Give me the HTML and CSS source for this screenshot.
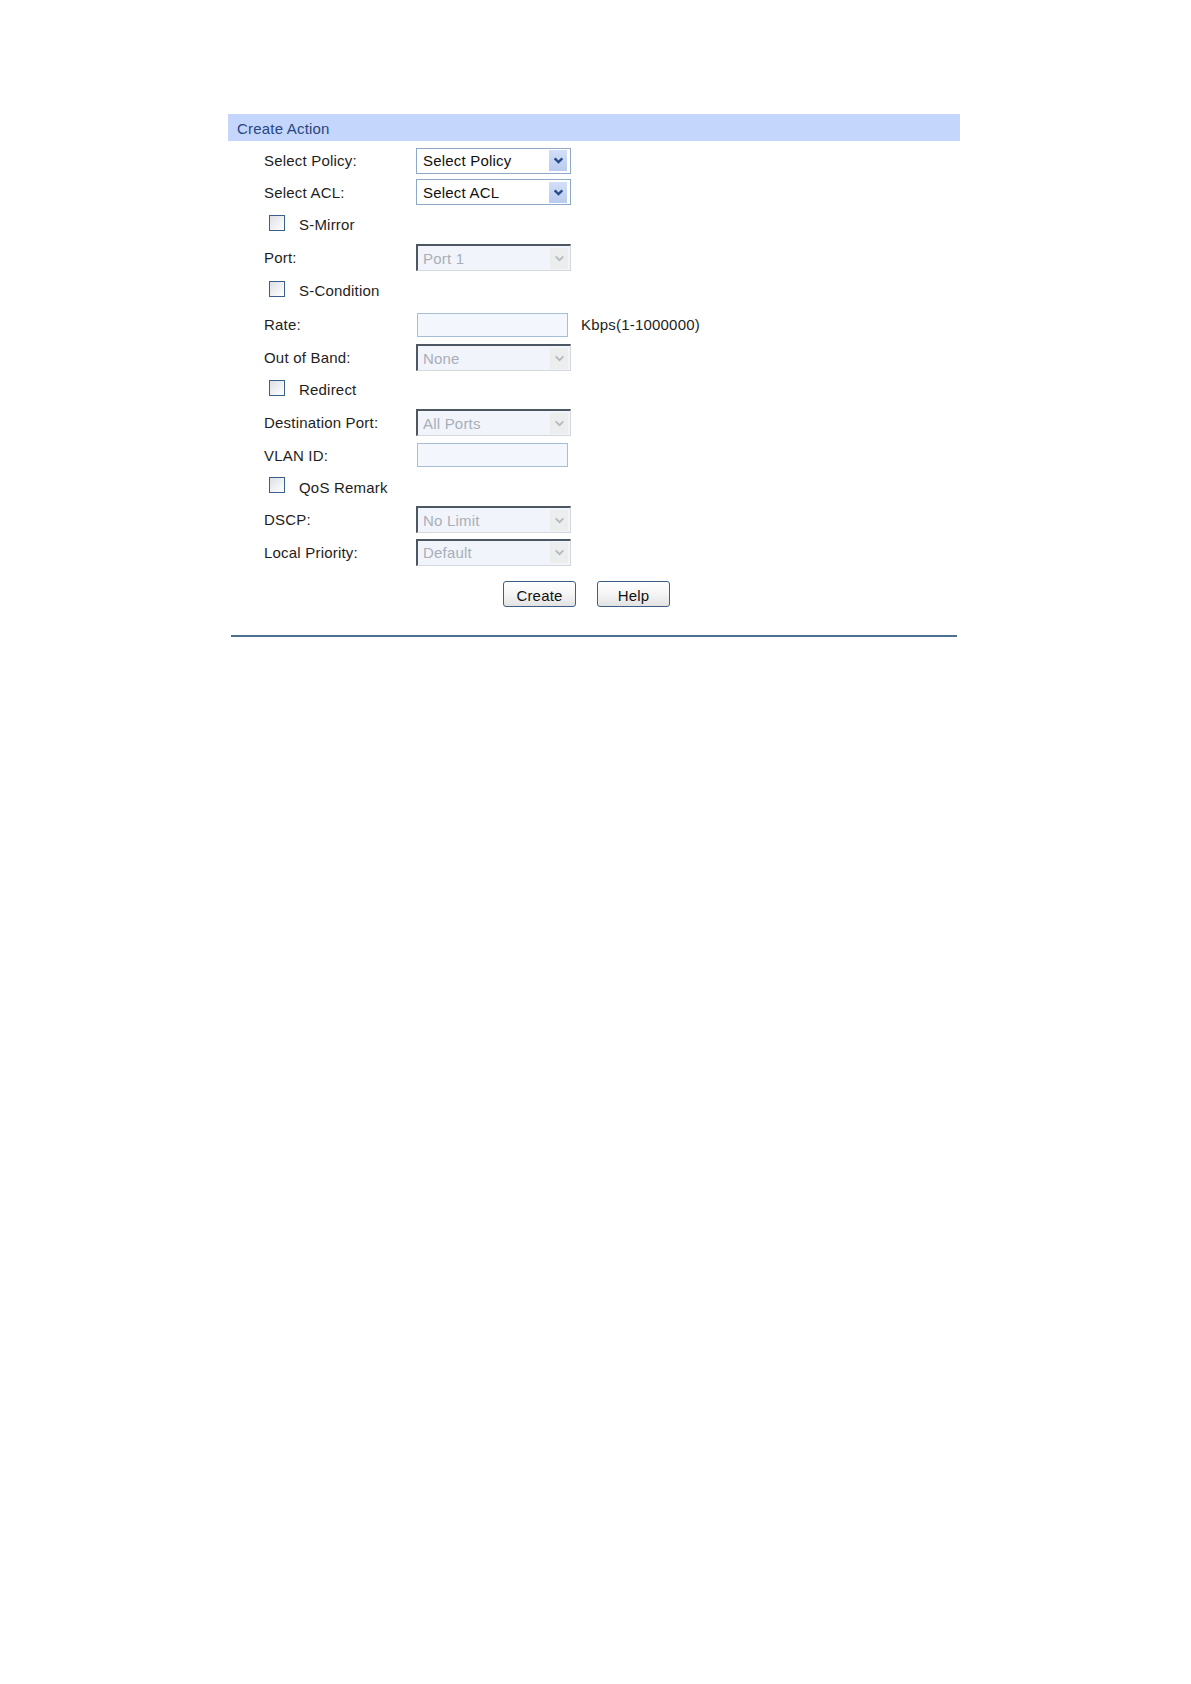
FILE: index.html
```html
<!DOCTYPE html>
<html>
<head>
<meta charset="utf-8">
<title>Create Action</title>
<link rel="stylesheet" href="styles.css">
</head>
<body>
<div class="panel">
  <div class="panel-head">Create Action</div>
  <div class="form">
    <div class="row h31">
      <span class="label">Select Policy:</span>
      <div class="select"><span class="val">Select Policy</span><span class="arrow"><svg viewBox="0 0 10 8" width="11" height="9"><path d="M1.5 2 L5 5.5 L8.5 2" fill="none" stroke-width="2.2"/></svg></span></div>
    </div>
    <div class="row h32">
      <span class="label">Select ACL:</span>
      <div class="select"><span class="val">Select ACL</span><span class="arrow"><svg viewBox="0 0 10 8" width="11" height="9"><path d="M1.5 2 L5 5.5 L8.5 2" fill="none" stroke-width="2.2"/></svg></span></div>
    </div>
    <div class="row h33 check-row">
      <span class="box"></span><span class="check-label">S-Mirror</span>
    </div>
    <div class="row h33">
      <span class="label">Port:</span>
      <div class="select disabled"><span class="val">Port 1</span><span class="arrow"><svg viewBox="0 0 10 8" width="11" height="9"><path d="M1.5 2 L5 5.5 L8.5 2" fill="none" stroke-width="1.6"/></svg></span></div>
    </div>
    <div class="row h33 check-row">
      <span class="box"></span><span class="check-label">S-Condition</span>
    </div>
    <div class="row h35">
      <span class="label">Rate:</span>
      <div class="input"></div>
      <span class="unit">Kbps(1-1000000)</span>
    </div>
    <div class="row h31">
      <span class="label">Out of Band:</span>
      <div class="select disabled"><span class="val">None</span><span class="arrow"><svg viewBox="0 0 10 8" width="11" height="9"><path d="M1.5 2 L5 5.5 L8.5 2" fill="none" stroke-width="1.6"/></svg></span></div>
    </div>
    <div class="row h33 check-row">
      <span class="box"></span><span class="check-label">Redirect</span>
    </div>
    <div class="row h33">
      <span class="label">Destination Port:</span>
      <div class="select disabled"><span class="val">All Ports</span><span class="arrow"><svg viewBox="0 0 10 8" width="11" height="9"><path d="M1.5 2 L5 5.5 L8.5 2" fill="none" stroke-width="1.6"/></svg></span></div>
    </div>
    <div class="row h32">
      <span class="label">VLAN ID:</span>
      <div class="input"></div>
    </div>
    <div class="row h32 check-row">
      <span class="box"></span><span class="check-label">QoS Remark</span>
    </div>
    <div class="row h33">
      <span class="label">DSCP:</span>
      <div class="select disabled"><span class="val">No Limit</span><span class="arrow"><svg viewBox="0 0 10 8" width="11" height="9"><path d="M1.5 2 L5 5.5 L8.5 2" fill="none" stroke-width="1.6"/></svg></span></div>
    </div>
    <div class="row h32">
      <span class="label">Local Priority:</span>
      <div class="select disabled"><span class="val">Default</span><span class="arrow"><svg viewBox="0 0 10 8" width="11" height="9"><path d="M1.5 2 L5 5.5 L8.5 2" fill="none" stroke-width="1.6"/></svg></span></div>
    </div>
    <div class="buttons">
      <button class="btn">Create</button>
      <button class="btn">Help</button>
    </div>
  </div>
  <div class="rule"></div>
</div>
</body>
</html>
```
FILE: styles.css
```css
html, body {
  margin: 0;
  padding: 0;
  background: #ffffff;
}
body {
  font-family: "Liberation Sans", Arial, sans-serif;
  font-size: 15px;
  letter-spacing: 0.2px;
  color: #1e1e1e;
}
.panel {
  margin: 114px 0 0 228px;
  width: 732px;
}
.panel-head {
  height: 27px;
  line-height: 29px;
  background: #c5d6fd;
  color: #27467d;
  padding-left: 9px;
  font-size: 15px;
}
.form {
  padding-top: 4px;
}
.row {
  display: flex;
  align-items: center;
}
.h31 { height: 31px; }
.h32 { height: 32px; }
.h33 { height: 33px; }
.h35 { height: 35px; }
.label {
  width: 152px;
  margin-left: 36px;
  flex: none;
}
.check-row {
  padding-left: 41px;
}
.box {
  width: 14px;
  height: 14px;
  border: 1px solid #3a5f8c;
  background: linear-gradient(135deg, #dcdfe4 0%, #f2f3f5 60%, #ffffff 100%);
  flex: none;
  position: relative;
  top: -2px;
}
.check-label {
  margin-left: 14px;
}
.select {
  width: 153px;
  height: 24px;
  border: 1px solid #8ea8c8;
  background: #ffffff;
  display: flex;
  align-items: center;
  justify-content: space-between;
  box-sizing: content-box;
}
.select .val {
  padding-left: 6px;
  color: #111;
}
.select .arrow {
  width: 18px;
  height: 21px;
  margin-right: 3px;
  background: linear-gradient(#d3dff8, #b9cbee);
  display: flex;
  align-items: center;
  justify-content: center;
}
.select .arrow svg path {
  stroke: #2b4c8c;
}
.select.disabled {
  width: 152px;
  height: 24px;
  border-top: 2px solid #4d5761;
  border-left: 2px solid #4d5761;
  border-right: 1px solid #d4d8dc;
  border-bottom: 1px solid #d4d8dc;
  background: #f1f4fb;
}
.select.disabled .val {
  padding-left: 5px;
  color: #a9afb8;
}
.select.disabled .arrow {
  background: #eceeee;
  margin-right: 2px;
}
.select.disabled .arrow svg path {
  stroke: #b3b9bf;
}
.input {
  width: 149px;
  height: 22px;
  border: 1px solid #a7bed8;
  background: #f3f6fc;
  margin-left: 1px;
}
.unit {
  margin-left: 13px;
}
.buttons {
  display: flex;
  gap: 21px;
  padding-left: 275px;
  margin-top: 13px;
}
.btn {
  width: 73px;
  height: 26px;
  border: 1px solid #3d5f86;
  border-radius: 3px;
  background: linear-gradient(#ffffff 0%, #f4f4f4 55%, #e2e2e2 100%);
  font-family: "Liberation Sans", Arial, sans-serif;
  font-size: 15px;
  letter-spacing: 0.2px;
  color: #111;
  padding: 2px 0 0 0;
  margin: 0;
}
.rule {
  height: 2px;
  background: #4b7092;
  margin: 28px 3px 0 3px;
}
```
